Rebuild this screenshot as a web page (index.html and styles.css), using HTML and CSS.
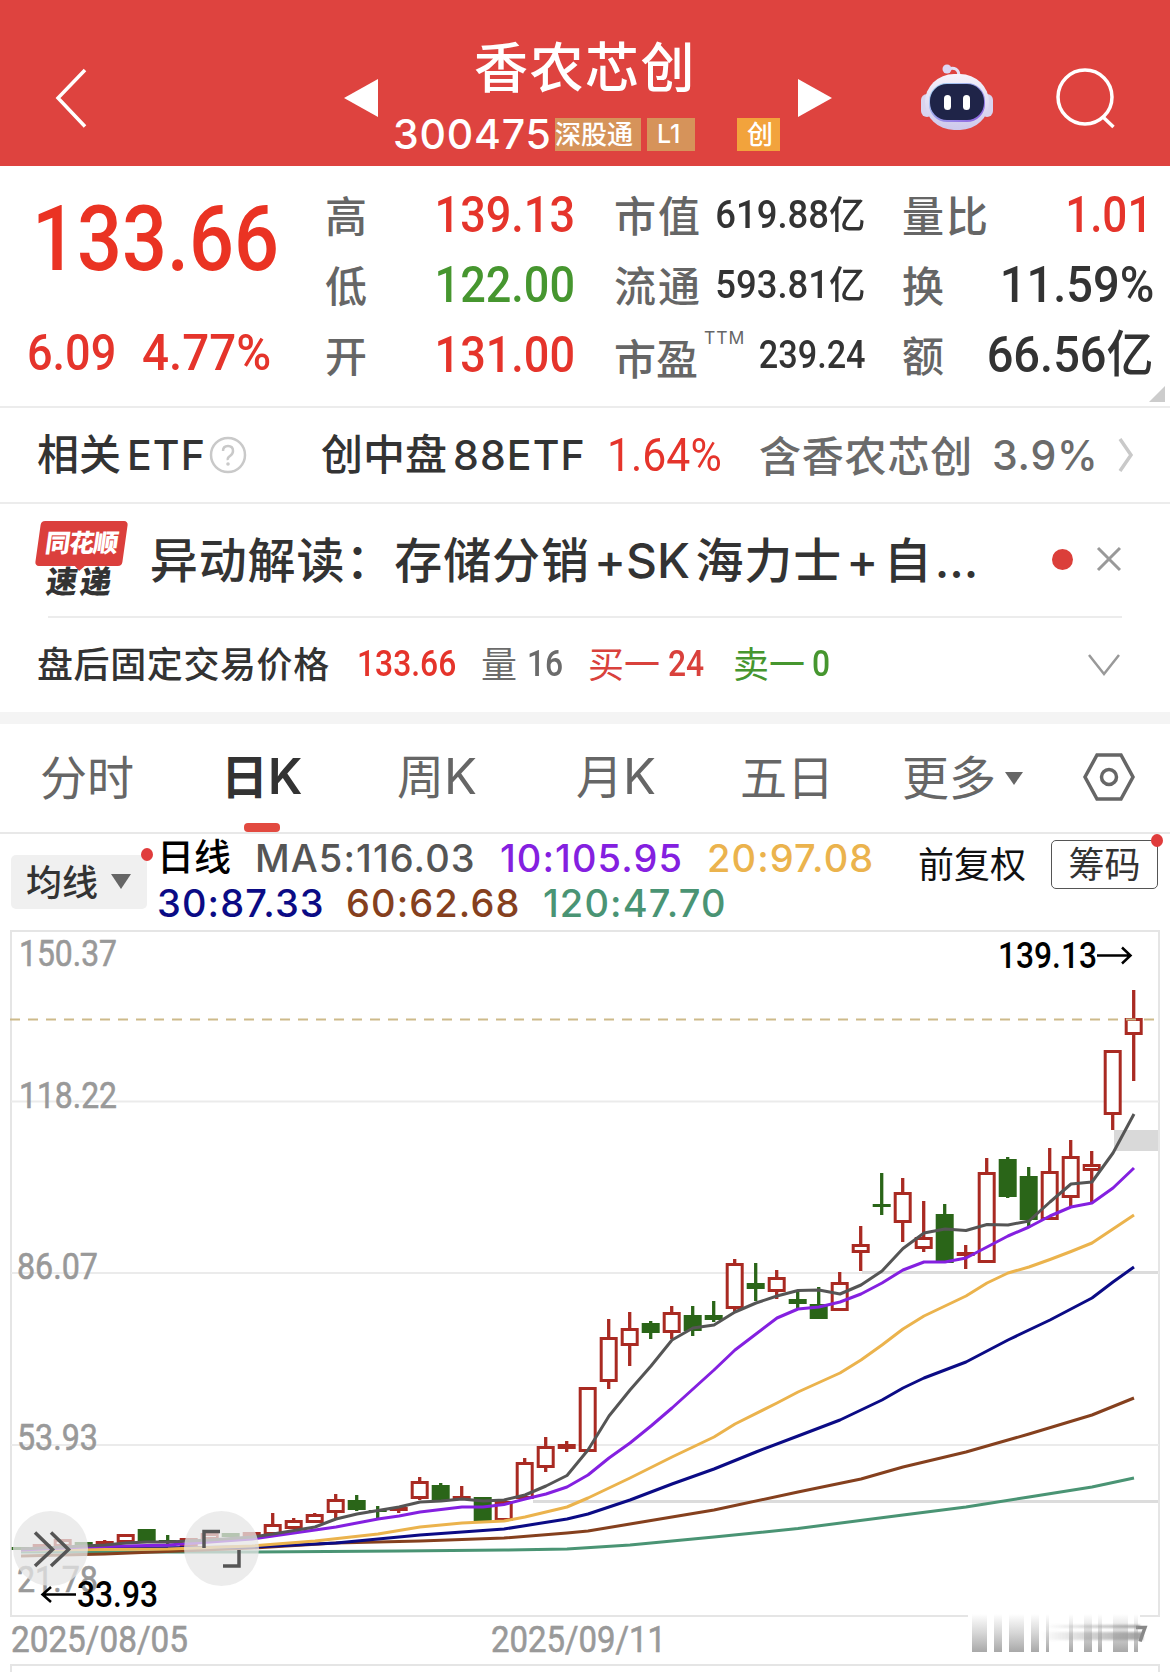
FILE: index.html
```html
<!DOCTYPE html>
<html lang="zh-CN">
<head>
	<meta charset="utf-8">
	<title>香农芯创 300475</title>
	<link rel="stylesheet" href="styles.css">
</head>
<body>
<div class="header">
	<svg class="back" width="36" height="64" viewBox="0 0 36 64"><path d="M32 4L5 32l27 28.500"/></svg>
	<svg class="prev" width="34" height="40" viewBox="0 0 34 40"><path d="M34 1v38L0 20z"/></svg>
	<div class="stock">
		<div class="name">香农芯创</div>
		<div class="code">
			<span class="digits">300475</span>
			<span class="tag hk">深股通</span>
			<span class="tag l1">L1</span>
			<span class="tag cy">创</span>
		</div>
	</div>
	<svg class="next" width="34" height="40" viewBox="0 0 34 40"><path d="M0 1v38l34-19z"/></svg>
	<svg class="robot" width="74" height="70" viewBox="0 0 74 70">
		<defs>
			<linearGradient id="shell" x1="0" y1="0" x2="0" y2="1"><stop offset="0" stop-color="#f6f3fb"/><stop offset="1" stop-color="#cdc8ec"/></linearGradient>
			<linearGradient id="glow" x1="0" y1="0" x2="1" y2="1"><stop offset="0" stop-color="#a9dcf4"/><stop offset="1" stop-color="#8c5be0"/></linearGradient>
		</defs>
		<path d="M28 7q10-3 11 6" fill="none" stroke="#e4dff5" stroke-width="3"/>
		<circle cx="27" cy="7" r="4.500" fill="#dcd6f4"/>
		<rect x="1" y="32" width="12" height="23" rx="6" fill="#d9d4ef"/>
		<rect x="61" y="32" width="12" height="23" rx="6" fill="#d9d4ef"/>
		<rect x="5" y="12" width="64" height="56" rx="29" fill="url(#shell)"/>
		<rect x="9" y="21" width="56" height="39" rx="18" fill="url(#glow)"/>
		<rect x="10" y="22" width="54" height="36" rx="17" fill="#1f2448"/>
		<rect x="24" y="33" width="7" height="15" rx="3.500" fill="#fff"/>
		<rect x="43" y="33" width="7" height="15" rx="3.500" fill="#fff"/>
	</svg>
	<svg class="search" width="62" height="64" viewBox="0 0 62 64"><circle cx="30" cy="30" r="27"/><path d="M48 50l10.500 10"/></svg>
</div>

<div class="quote">
	<div class="price">
		<div class="last"><span class="num">133.66</span></div>
		<div class="change"><span class="num">6.09</span><span class="num wide">4.77%</span></div>
	</div>
	<div class="cells">
		<span class="label">高</span><span class="num up">139.13</span>
		<span class="label">市值</span><span class="num small">619.88亿</span>
		<span class="label">量比</span><span class="num up last-col">1.01</span>
		<span class="label">低</span><span class="num down">122.00</span>
		<span class="label">流通</span><span class="num small">593.81亿</span>
		<span class="label">换</span><span class="num wide">11.59%</span>
		<span class="label">开</span><span class="num up">131.00</span>
		<span class="label ttm">市盈<sup>TTM</sup></span><span class="num small pe">239.24</span>
		<span class="label">额</span><span class="num wide">66.56亿</span>
	</div>
	<i class="corner"></i>
</div>

<div class="etf">
	<span class="strong">相关<b>ETF</b></span>
	<svg width="38" height="38" viewBox="0 0 38 38"><circle cx="19" cy="19" r="17"/><path d="M14 15q0-5 5-5t5 5q0 3-3 5t-2 4"/><circle class="dot" cx="19" cy="28" r="1.800"/></svg>
	<span class="strong">创中盘<b>88ETF</b></span>
	<span class="num up">1.64%</span>
	<span class="gray">含香农芯创</span>
	<span class="gray pct">3.9%</span>
	<svg width="20" height="38" viewBox="0 0 20 38"><path class="thick" d="M3 3l11 16L3 35"/></svg>
</div>

<div class="news">
	<div class="logo"><span class="ths">同花顺</span><span class="sd">速递</span></div>
	<div class="headline">异动解读：存储分销<b>+SK</b>海力士<b>+</b>自<b>...</b></div>
	<i class="dot"></i>
	<svg width="26" height="26" viewBox="0 0 26 26"><path d="M2 2l22 22M24 2L2 24"/></svg>
</div>

<div class="after">
	<span class="title">盘后固定交易价格</span>
	<span class="num up">133.66</span>
	<span class="gray">量</span><span class="num gray">16</span>
	<span class="buy">买一</span><span class="num buy">24</span>
	<span class="down">卖一</span><span class="num down">0</span>
	<svg width="36" height="24" viewBox="0 0 36 24"><path d="M3 2l15 19L33 2"/></svg>
</div>

<div class="tabs">
	<span>分时</span>
	<span class="active">日<b>K</b></span>
	<span>周<b>K</b></span>
	<span>月<b>K</b></span>
	<span>五日</span>
	<span>更多<i class="caret"></i></span>
	<svg width="54" height="48" viewBox="0 0 54 48"><path d="M15 2h24l12 22-12 22H15L3 24z"/><circle cx="27" cy="24" r="7.500"/></svg>
</div>

<div class="legend">
	<div class="maBtn">均线<i class="caret"></i><i class="badge"></i></div>
	<div class="ma">
		<div class="row1"><span class="day">日线</span><span class="ma5">MA5:116.03</span><span class="ma10">10:105.95</span><span class="ma20">20:97.08</span></div>
		<div class="row2"><span class="ma30">30:87.33</span><span class="ma60">60:62.68</span><span class="ma120">120:47.70</span></div>
	</div>
	<span class="fq">前复权</span>
	<div class="chip">筹码<i class="badge"></i></div>
</div>

<svg id="chart" width="1170" height="742" viewBox="0 930 1170 742">
	<defs>
		<linearGradient id="smear" x1="0" y1="0" x2="0" y2="1"><stop offset="0" stop-color="#999" stop-opacity="0"/><stop offset=".5" stop-color="#999" stop-opacity=".4"/><stop offset="1" stop-color="#999" stop-opacity=".85"/></linearGradient>
		<linearGradient id="smearX" x1="0" y1="0" x2="1" y2="0"><stop offset="0" stop-color="#888" stop-opacity="0"/><stop offset="1" stop-color="#777" stop-opacity=".7"/></linearGradient>
		<filter id="soft"><feGaussianBlur stdDeviation="1.2"/></filter>
	</defs>
	<g class="frame">
		<path d="M11 931H1159V1616H11zM11 1672V1665H1159V1672"/>
		<path class="thin" d="M11 1101.500H1159M11 1273H1159M11 1445H1159"/>
		<path class="level" d="M862 1272.500H1158M533 1501.500H1158"/>
	</g>
	<rect class="gap" x="1114" y="1130" width="44" height="21"/>
	<g class="axis">
		<text x="19" y="966" textLength="98" lengthAdjust="spacingAndGlyphs">150.37</text>
		<text x="19" y="1108" textLength="98" lengthAdjust="spacingAndGlyphs">118.22</text>
		<text x="17" y="1279" textLength="81" lengthAdjust="spacingAndGlyphs">86.07</text>
		<text x="17" y="1450" textLength="81" lengthAdjust="spacingAndGlyphs">53.93</text>
		<text x="17" y="1592" textLength="81" lengthAdjust="spacingAndGlyphs">21.78</text>
		<text x="11" y="1652" textLength="177" lengthAdjust="spacingAndGlyphs">2025/08/05</text>
		<text x="491" y="1652" textLength="175" lengthAdjust="spacingAndGlyphs">2025/09/11</text>
	</g>
	<g id="candles"></g>
	<path class="current" d="M10 1019.500H1158"/>
	<g id="lines"></g>
	<g class="round">
		<circle cx="50.500" cy="1548.500" r="37.500"/>
		<circle cx="221.500" cy="1548.500" r="37.500"/>
		<path d="M35 1532.500l17.500 17L35 1566M51 1532.500l17.500 17L51 1566"/>
		<path d="M220 1531.500H204V1548M223 1566H239V1550"/>
	</g>
	<g class="mark">
		<text x="998" y="968" textLength="99" lengthAdjust="spacingAndGlyphs">139.13</text>
		<path d="M1097 955.500h33M1122 947.500l8.500 8-8.500 8"/>
		<text x="77" y="1607" textLength="81" lengthAdjust="spacingAndGlyphs">33.93</text>
		<path d="M76 1594.500H43M51 1587l-8.500 7.500 8.500 7.500"/>
	</g>
	<rect x="968" y="1612" width="172" height="10" fill="#fff"/>
	<g id="smudge">
		<g filter="url(#soft)">
			<rect x="1045" y="1625" width="95" height="3" fill="url(#smearX)"/>
			<rect x="1040" y="1632" width="103" height="8" fill="url(#smearX)"/>
		</g>
		<path d="M1136 1627.500h9l-5 14" fill="none" stroke="#888" stroke-width="3.500"/>
	</g>
</svg>

<script>
var NS = "http://www.w3.org/2000/svg";

// g = falling day; values are [g/r, high, top, bottom, low]
var candles = [
	["g",1547,1547,1550,1550], ["r",1544,1544,1549,1549], ["r",1539,1539,1547,1547], ["g",1542,1542,1546,1546],
	["r",1540,1541,1546,1546], ["r",1534,1534,1543,1543], ["g",1529,1529,1542,1542], ["g",1535,1540,1543,1545],
	["r",1538,1538,1547,1547], ["r",1533,1533,1540,1540], ["g",1533,1533,1537,1537], ["r",1532,1532,1538,1538],
	["r",1513,1524,1535,1535], ["r",1518,1520,1529,1529], ["r",1513,1514,1523,1523], ["r",1494,1499,1513,1519],
	["g",1495,1500,1510,1511], ["g",1506,1510,1512,1518], ["r",1506,1507,1511,1513], ["r",1477,1481,1499,1500],
	["g",1483,1485,1500,1500], ["r",1486,1496,1500,1500], ["g",1497,1497,1521,1523], ["r",1501,1501,1521,1521],
	["r",1458,1462,1499,1499], ["r",1437,1446,1468,1472], ["r",1441,1444,1449,1452], ["r",1387,1387,1452,1452],
	["r",1319,1337,1382,1389], ["r",1312,1328,1346,1366], ["g",1321,1323,1333,1339], ["r",1306,1312,1333,1339],
	["g",1306,1315,1331,1336], ["g",1301,1315,1320,1322], ["r",1259,1263,1309,1312], ["g",1263,1283,1289,1301],
	["r",1270,1277,1292,1299], ["g",1291,1299,1304,1309], ["g",1287,1304,1319,1319], ["r",1272,1282,1311,1311],
	["r",1226,1244,1253,1271], ["g",1173,1204,1207,1215], ["r",1178,1192,1223,1242], ["r",1201,1237,1249,1252],
	["g",1204,1214,1263,1263], ["r",1245,1252,1256,1269], ["r",1158,1172,1263,1263], ["g",1157,1159,1197,1198],
	["g",1167,1176,1220,1228], ["r",1148,1171,1220,1220], ["r",1140,1156,1198,1207], ["r",1151,1164,1171,1203],
	["r",1050,1050,1115,1130], ["r",990,1018,1035,1081]
];

var lines = {
	ma120: "21,1552 252,1552 399,1551 504,1550 567,1549 630,1545 714,1537 798,1528.5 903,1515 966,1507 1029,1497 1092,1487 1134,1478",
	ma60: "21,1556 105,1554 252,1548 336,1543 420,1541 504,1538 567,1533 588,1531 630,1524 714,1510 798,1492 861,1479 903,1467 966,1452 1029,1434 1092,1415 1134,1398",
	ma30: "42,1549 252,1547 336,1543 399,1537 420,1535 504,1529 567,1519 588,1514 630,1500 672,1484 714,1469 756,1452 798,1436 840,1420 882,1400 903,1388 924,1378 966,1362 1008,1340 1050,1320 1092,1298 1113,1282 1134,1267",
	ma20: "21,1550 168,1549 252,1546 315,1541 378,1534 420,1527 462,1523 504,1521 525,1517 567,1507 588,1498 630,1478 672,1457 714,1437 735,1424 777,1403 798,1392 840,1373 861,1360 882,1345 903,1329 924,1316 966,1296 987,1283 1008,1273 1029,1267 1050,1259.5 1071,1251.5 1092,1243 1113,1229 1134,1215",
	ma10: "21,1550 84,1547 168,1545 252,1539 294,1533 336,1527 378,1519 399,1516 420,1512 462,1507 483,1507 504,1504.5 525,1499 546,1494 567,1487 588,1475 609,1458 630,1443 651,1426 672,1408 693,1389 714,1370 735,1350 756,1334 777,1318 798,1309 819,1307 840,1302 861,1294 882,1283 903,1270 924,1262 945,1262 966,1258 987,1247 1008,1236 1029,1227 1050,1216 1071,1207 1092,1203 1113,1188 1134,1168",
	ma5: "21,1549 84,1546 105,1545 126,1543 147,1542 168,1542 210,1540 252,1537 273,1534 315,1527 336,1519 357,1514 399,1507 420,1502 441,1501 462,1499 483,1501 504,1500 525,1495 546,1486 567,1475.5 588,1450 609,1416 630,1390 651,1366 672,1340 693,1328 714,1325 735,1312 756,1303 777,1296 798,1290.5 819,1290 840,1294 861,1285 882,1271 903,1248.5 924,1233 945,1229 966,1230.5 987,1224.5 1008,1225 1029,1221 1050,1202 1071,1184 1092,1182 1113,1153 1134,1114"
};

function add(parent, tag, attrs) {
	var node = document.createElementNS(NS, tag);
	for (var key in attrs) {
		node.setAttribute(key, attrs[key]);
	}
	document.getElementById(parent).appendChild(node);
}

for (var i = 0; i < candles.length; i++) {
	var c = candles[i];
	var x = 20.7 + i * 21;
	add("candles", "path", {"class": "wick " + c[0], d: "M" + x + " " + c[1] + "V" + c[2] + "M" + x + " " + c[3] + "V" + c[4]});
	if (c[0] === "g") {
		add("candles", "rect", {"class": "g", x: x - 9, y: c[2], width: 18, height: c[3] - c[2]});
	}
	else {
		add("candles", "rect", {"class": "r", x: x - 7.5, y: c[2] + 1.5, width: 15, height: Math.max(c[3] - c[2] - 3, 0.5)});
	}
}

for (var name in lines) {
	add("lines", "polyline", {"class": name, points: lines[name]});
}

var bars = [[972,15], [994,8], [1009,15], [1031,8], [1046,3], [1069,4], [1084,8], [1098,4], [1113,15], [1134,4]];
for (var i = 0; i < bars.length; i++) {
	add("smudge", "rect", {x: bars[i][0], y: 1614, width: bars[i][1], height: 38, fill: "url(#smear)"});
}
</script>
</body>
</html>
```
FILE: styles.css
```css
* { box-sizing: border-box; }
body {
	width: 1170px;
	height: 1672px;
	margin: 0;
	overflow: hidden;
	background-color: #fff;
	color: #333;
	font-family: "Noto Sans CJK SC", sans-serif;
	white-space: nowrap;
}
svg { display: block; fill: none; }
i { display: block; font-style: normal; }
b, .digits, .pct { font-family: Inter, sans-serif; font-weight: 500; }

.num {
	font-family: Roboto, "Noto Sans CJK SC", sans-serif;
	font-weight: 500;
	transform: scaleX(.9);
	transform-origin: left;
}
.wide { transform: scaleX(.94); }
.up { color: #e5342b; }
.down { color: #46962f; }
.buy { color: #d9413c; }
.gray { color: #6b6b6b; }

/* header */
.header {
	height: 166px;
	display: flex;
	align-items: flex-start;
	background-color: #de433f;
	color: #fff;
}
.back { margin: 66px 0 0 53px; stroke: #fff; stroke-width: 3.5; }
.prev { margin: 78px 0 0 255px; fill: #fff; }
.next { margin: 78px 0 0 10px; fill: #fff; }
.robot { margin: 62px 0 0 88px; }
.search { margin: 67px 0 0 61px; stroke: #fff; stroke-width: 3.5; }
.stock { width: 394px; margin-left: 16px; }
.name {
	height: 118px;
	padding-left: 80px;
	font-size: 54px;
	line-height: 129px;
	letter-spacing: 1.5px;
	font-weight: 500;
}
.code {
	display: flex;
	height: 33px;
	line-height: 32px;
}
.digits {
	width: 161px;
	font-size: 41px;
	letter-spacing: .8px;
	text-indent: -1px;
}
.tag {
	height: 33px;
	padding-left: 8px;
	background-color: #d6935a;
	font-size: 26px;
	line-height: 30px;
	font-weight: 500;
}
.hk { width: 86px; padding-left: 0; }
.l1 { width: 48px; margin-left: 6px; padding-left: 10px; font-family: Inter, sans-serif; font-size: 25px; line-height: 32px; }
.cy { width: 43px; margin-left: 42px; padding-left: 10px; background-color: #f2a33c; }

/* quote */
.quote {
	position: relative;
	height: 242px;
	display: flex;
	border-bottom: 2px solid #ececec;
}
.price { width: 325px; color: #e5342b; }
.last {
	height: 142px;
	padding-left: 32px;
	font-size: 91px;
	line-height: 146px;
}
.last .num { display: block; color: #ea3323; transform: scaleX(.87); }
.change {
	display: grid;
	grid-template-columns: 115px auto;
	padding-left: 27px;
	font-size: 50px;
	line-height: 91px;
}
.change .wide { transform: scaleX(.95); }
.cells {
	display: grid;
	grid-template-columns: 41px 209px 125px 166px 115px 173px;
	grid-template-rows: 70px 70px 69px;
	padding-top: 14px;
	line-height: 70px;
}
.cells .label { font-size: 42px; line-height: 68px; font-weight: 450; color: #666; }
.cells .label:nth-child(6n+3) { padding-left: 39px; letter-spacing: 2px; }
.cells .label:nth-child(6n+5) { padding-left: 36px; letter-spacing: 2px; }
.cells .num {
	font-size: 50px;
	justify-self: end;
	transform-origin: right;
}
.cells .small { font-size: 38px; transform: scaleX(.96); }
.cells .pe { transform: scaleX(.9); }
.cells .last-col { transform: scaleX(.88); padding-right: 2px; }
.cells .label.ttm { padding-top: 3px; letter-spacing: 0; }
.ttm sup {
	margin-left: 6px;
	font: 400 17.5px Inter, sans-serif;
	vertical-align: 31px;
	line-height: 0;
	letter-spacing: 1px;
}
.corner {
	position: absolute;
	right: 5px;
	bottom: 4px;
	border: 8px solid #ccc;
	border-top-color: transparent;
	border-left-color: transparent;
}

/* related etf */
.etf {
	height: 96px;
	display: grid;
	grid-template-columns: 172px 112px 286px 152px 233px 125px auto;
	align-items: center;
	padding: 0 0 4px 37px;
	border-bottom: 2px solid #ececec;
	font-size: 42px;
	line-height: 88px;
}
.etf span { padding-bottom: 3px; }
.etf b { margin-left: 6px; font-size: 41px; letter-spacing: 1.1px; }
.strong { font-weight: 500; }
.etf .num { padding-bottom: 0; font-size: 46px; font-weight: 400; transform: scaleX(.93); }
.etf .gray { letter-spacing: .8px; font-weight: 450; }
.etf .pct { padding-bottom: 1px; font-size: 41px; font-weight: 500; }
.etf svg { margin-top: -1px; stroke: #c9c9c9; stroke-width: 2.5; }
.etf svg .dot { fill: #c9c9c9; stroke: none; }
.etf svg .thick { stroke-width: 3.5; }

/* news */
.news {
	height: 114px;
	display: flex;
	align-items: center;
	margin-right: 48px;
	padding-left: 36px;
	position: relative;
}
.news::after {
	content: "";
	position: absolute;
	left: 48px;
	right: 0;
	bottom: 0;
	height: 2px;
	background-color: #ececec;
}
.logo { width: 91px; height: 80px; display: flex; flex-direction: column; align-items: center; }
.logo span { font-weight: 900; transform: skewX(-8deg); }
.ths {
	position: relative;
	width: 87px;
	height: 45px;
	background-color: #db3f3c;
	border-radius: 4px;
	color: #fff;
	font-size: 25px;
	line-height: 41px;
	text-align: center;
	letter-spacing: -1px;
}
.ths::after {
	content: "";
	position: absolute;
	left: 39px;
	top: 44px;
	border: 6px solid transparent;
	border-top-color: #db3f3c;
}
.sd { font-size: 31px; line-height: 27px; letter-spacing: 3px; }
.headline {
	width: 897px;
	padding: 0 0 9px 23px;
	font-size: 48px;
	font-weight: 500;
	letter-spacing: .9px;
}
.headline b { margin: 0 5.5px 0 4px; font-size: 48px; font-weight: 550; letter-spacing: 0; }
.headline b:last-child { margin-left: 2px; }
.news .dot {
	width: 21px;
	height: 21px;
	margin: -4px 0 0 30px;
	border-radius: 50%;
	background-color: #db3f3a;
}
.news svg { margin: -4px 0 0 23px; stroke: #999; stroke-width: 3; }

/* after-hours trading */
.after {
	height: 106px;
	display: grid;
	grid-template-columns: 320px 124px 46px 61px 80px 65px 79px 274px auto;
	align-items: center;
	padding-left: 37px;
	border-bottom: 12px solid #f4f4f4;
	font-size: 36px;
}
.after span { padding-bottom: 6px; font-weight: 400; }
.after .num { padding-bottom: 3px; font-size: 37px; font-weight: 500; transform: scaleX(.86); }
.after .title { font-weight: 500; letter-spacing: .6px; }
.after svg { stroke: #999; stroke-width: 2.5; }

/* tabs */
.tabs {
	height: 110px;
	display: grid;
	grid-template-columns: 185px 172px 179px 164px 162px 180px auto;
	align-items: center;
	padding: 0 0 6px 40px;
	border-bottom: 2px solid #e8e8e8;
	color: #666;
	font-size: 47px;
	line-height: 98px;
}
.tabs b { font-size: 49px; font-weight: 400; }
.tabs span { position: relative; }
.tabs .active, .tabs .active b { color: #333; font-weight: 600; }
.tabs .active { text-indent: -4px; }
.active::after {
	content: "";
	position: absolute;
	left: 19px;
	bottom: -6px;
	width: 36px;
	height: 9px;
	border-radius: 4px;
	background-color: #e24a40;
}
.tabs svg { margin-top: 3px; stroke: #666; stroke-width: 3.5; }
.caret {
	display: inline-block;
	border: 9px solid transparent;
	border-top: 13px solid #666;
	border-bottom: 0;
	margin-left: 9px;
	vertical-align: 10px;
}

/* moving average legend */
.legend {
	height: 96px;
	display: flex;
	align-items: flex-start;
}
.badge {
	position: absolute;
	top: -7px;
	right: -6px;
	width: 12px;
	height: 13px;
	border-radius: 50%;
	background-color: #e03c3c;
}
.maBtn {
	position: relative;
	width: 136px;
	height: 54px;
	margin: 21px 0 0 11px;
	padding-left: 15px;
	border-radius: 5px;
	background-color: #f0f0f0;
	font-size: 36px;
	font-weight: 500;
	line-height: 51px;
}
.maBtn .caret { border-width: 15px 10.5px 0; margin-left: 13px; vertical-align: 7px; }
.ma {
	width: 771px;
	padding: 1px 0 0 10px;
	font: 550 38px/46px Inter, "Noto Sans CJK SC", sans-serif;
	letter-spacing: 1.1px;
}
.row1, .row2 { display: grid; height: 45px; align-items: center; }
.row1 { grid-template-columns: 98px 245px 207px auto; }
.row2 { grid-template-columns: 189px 197px auto; }
.day { color: #000; font-size: 37px; letter-spacing: 0; }
.ma5 { color: #555; stroke: #555; }
.ma10 { color: #8420e0; stroke: #8420e0; }
.ma20 { color: #ebb34d; stroke: #ebb34d; }
.ma30 { color: #0b0b85; stroke: #0b0b85; }
.ma60 { color: #85401e; stroke: #85401e; }
.ma120 { color: #4a9474; stroke: #4a9474; }
.fq { width: 133px; color: #111; font-size: 36px; line-height: 57px; }
.chip {
	position: relative;
	width: 107px;
	height: 49px;
	margin-top: 6px;
	border: 1.5px solid #555;
	border-radius: 5px;
	font-size: 36px;
	line-height: 42px;
	text-align: center;
}

/* chart */
.frame path { stroke: #e5e5e5; stroke-width: 2; }
.frame .thin { stroke: #ebebeb; }
.frame .level { stroke: #dcdcdc; stroke-width: 3; }
.gap { fill: #d9d9d9; }
.current { stroke: #cdba8a; stroke-width: 1.8; stroke-dasharray: 10 8; }
#chart text { font: 500 37px Roboto, sans-serif; }
.axis { fill: #999; }
#chart .axis text { font-weight: 400; stroke: #999; stroke-width: .6; }
.mark { fill: #000; }
.mark path { fill: none; stroke: #000; stroke-width: 2.5; }
.wick { stroke-width: 3.3; }
.wick.r, rect.r { stroke: #a92a22; }
.wick.g { stroke: #2a6518; }
rect.r { fill: #fff; stroke-width: 3; }
rect.g { fill: #2a6518; }
#lines polyline { stroke-width: 3; stroke-linejoin: round; }
.round circle { fill: #e6e6e6; fill-opacity: .75; }
.round path { stroke: #555; stroke-width: 3.5; }
```
